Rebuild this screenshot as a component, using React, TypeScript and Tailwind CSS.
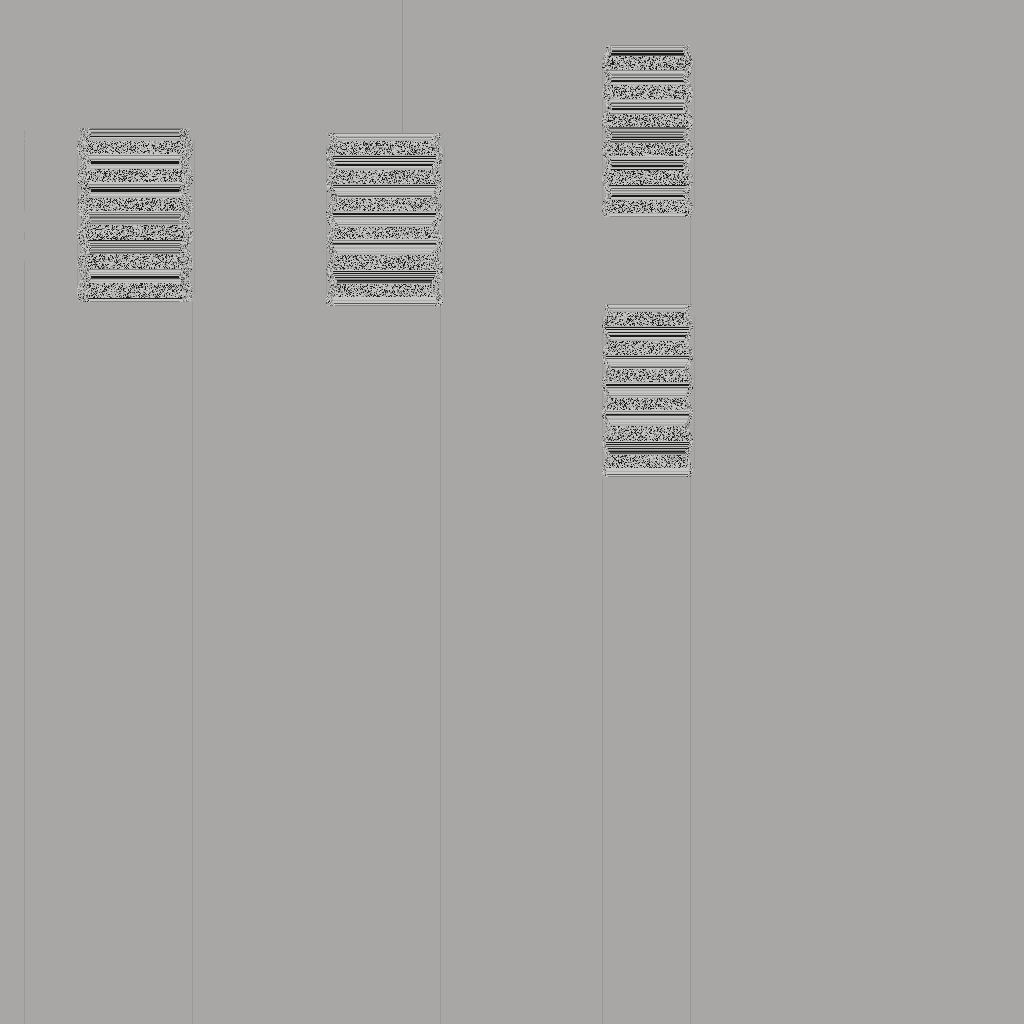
import React, { useMemo } from "react";

// One letter per pixel row: k/d/g/b/l are stripe shades from dark to light, n is grain.
const grain = (rows: number) => "n".repeat(rows);

const LEFT_ROWS = [
  "gdlbdgbbklbbb", grain(13), "lgllbglkkkbbllb", grain(13), "llgblkbkkkbbllbb", grain(13),
  "lgldbgdglggbgb", grain(15), "kbldldbdlggbdg", grain(15), "gllblglkkdblbl", grain(15), "kllg",
].join("");

const CENTER_ROWS = [
  "gllbglbb", grain(14), "bklkllklbkkllbb", grain(14), "bkldlllblblgdl", grain(13),
  "blkkldblbllblglb", grain(12), "lglbkdllbbllblbb", grain(15), "lklkldlkbgkddb", grain(13), "lllblldlg",
].join("");

const RIGHT_ROWS = [
  "glglbdkbkkd", grain(14), "gllbggldblkkblb", grain(14), "bllgdlbdlkkbllg", grain(13),
  "ddbbgdldbgkbkldg", grain(13), "lblbkldbbkkblk", grain(15), "kbldlgblgbkkllb", grain(13), "bllg",
].join("");

const SHADES = ["#1b1b19", "#575755", "#868684", "#aeaeac", "#c6c6c5"];
const LETTERS = "kdgbl";

function random(seed: number) {
  let s = seed;
  return () => {
    s = (s + 0x6d2b79f5) | 0;
    let t = Math.imul(s ^ (s >>> 15), 1 | s);
    t = (t + Math.imul(t ^ (t >>> 7), 61 | t)) ^ t;
    return ((t ^ (t >>> 14)) >>> 0) / 4294967296;
  };
}

function buildPaths(rows: string, width: number, seed: number, lead: number, rim: number) {
  const next = random(seed);
  const paths = ["", "", "", "", ""];
  const body = width - 2;
  for (let y = 0; y < rows.length; y++) {
    const letter = rows[y];
    const phase = (((y - lead) % 28.8) + 28.8) % 28.8;
    const wave = (1 - Math.cos((phase / 28.8) * Math.PI * 2)) / 2;
    const outer = Math.round(5 - 5 * Math.sqrt(wave));
    const inner = Math.round(rim - 5 * wave);
    let start = outer;
    let last = -1;
    const flush = (x: number) => {
      if (last >= 0) paths[last] += `M${start} ${y}h${x - start}v1h${start - x}z`;
    };
    for (let x = outer; x < body - outer; x++) {
      const edge = Math.min(x, body - 1 - x);
      let shade: number;
      if (edge < inner) {
        const r = next();
        shade = r < 0.04 ? 0 : r < 0.14 ? 1 : r < 0.38 ? 2 : r < 0.67 ? 3 : 4;
      } else if (letter === "n") {
        const r = next();
        shade = r < 0.17 ? 0 : r < 0.26 ? 1 : r < 0.37 ? 2 : r < 0.57 ? 3 : 4;
      } else {
        shade = LETTERS.indexOf(letter);
      }
      if (shade !== last) {
        flush(x);
        start = x;
        last = shade;
      }
    }
    flush(body - outer);
  }
  return paths;
}

type StackProps = {
  rows: string;
  width: number;
  seed: number;
  lead: number;
  rim: number;
  className: string;
};

function GrainStack({ rows, width, seed, lead, rim, className }: StackProps) {
  const paths = useMemo(
    () => buildPaths(rows, width, seed, lead, rim),
    [rows, width, seed, lead, rim],
  );
  const height = rows.length;
  return (
    <svg
      aria-hidden="true"
      width={width}
      height={height}
      viewBox={`0 0 ${width} ${height}`}
      shapeRendering="crispEdges"
      className={className}
    >
      <path d={`M0.5 12V${height - 8}M${width - 0.5} 12V${height - 8}`} stroke="#9c9b99" />
      {paths.map((d, i) => (
        <path key={SHADES[i]} d={d} fill={SHADES[i]} />
      ))}
    </svg>
  );
}

export default function App() {
  return (
    <main className="grid min-h-screen grid-cols-[minmax(0,25fr)_minmax(0,168fr)_minmax(0,248fr)_minmax(0,161fr)_minmax(0,89fr)_minmax(0,333fr)] bg-[#a8a7a5]">
      <div className="flex flex-col items-end pt-[131px]">
        <div className="h-4 border-l border-dashed border-[#999896]" />
        <div className="h-16 w-px bg-[#999896]" />
        <div className="mt-[21px] h-2 w-px bg-[#999896]" />
        <div className="mt-[21px] w-px flex-1 bg-[#999896]" />
      </div>
      <div className="flex flex-col items-end pt-32">
        <GrainStack rows={LEFT_ROWS} width={118} seed={17} lead={5} rim={14} className="-mr-[2px] block shrink-0" />
        <div className="w-px flex-1 bg-[#999896]" />
      </div>
      <div className="flex flex-col items-end">
        <div className="mr-[38px] h-[133px] w-px bg-[#969593]" />
        <GrainStack rows={CENTER_ROWS} width={119} seed={43} lead={8} rim={12} className="-mr-1 block shrink-0" />
        <div className="w-px flex-1 bg-[#999896]" />
      </div>
      <div />
      <div className="flex flex-col pt-[45px]">
        <GrainStack rows={RIGHT_ROWS} width={93} seed={71} lead={4} rim={10} className="block shrink-0" />
        <div className="h-[87px] border-r border-[#999896]" />
        <GrainStack rows={CENTER_ROWS} width={93} seed={97} lead={8} rim={9} className="block shrink-0" />
        <div className="flex-1 border-x border-[#999896]" />
      </div>
      <div />
    </main>
  );
}
